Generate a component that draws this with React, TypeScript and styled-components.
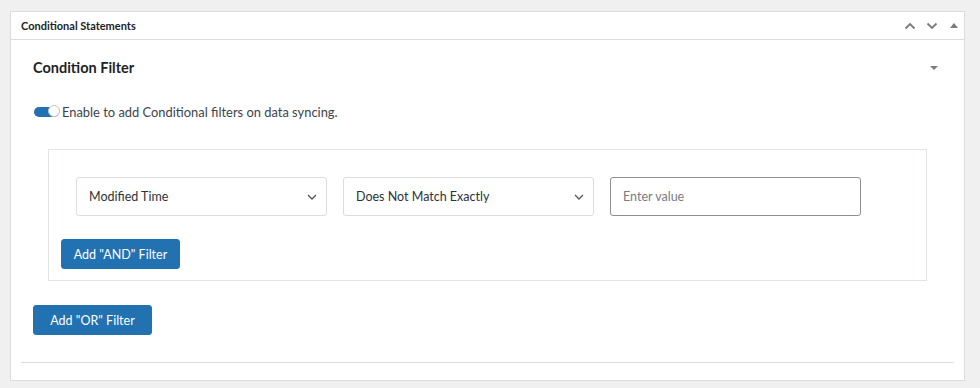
import styled, { createGlobalStyle } from "styled-components";

const GlobalStyle = createGlobalStyle`
  html, body {
    margin: 0;
    padding: 0;
    background: #f0f0f1;
    font-family: "Lato", "Open Sans", sans-serif;
    color: #1d2327;
  }
`;

const Page = styled.div`
  padding: 11px 15px 0 10px;
`;

const Panel = styled.div`
  background: #fff;
  border: 1px solid #dcdcde;
  box-shadow: 0 1px 1px rgba(0, 0, 0, 0.04);
  padding-bottom: 17px;
`;

const PanelHeader = styled.div`
  height: 27px;
  border-bottom: 1px solid #dcdcde;
  display: flex;
  align-items: center;
  justify-content: space-between;
  padding: 0 3px 0 10px;
`;

const PanelTitle = styled.h2`
  margin: 0;
  font-size: 11px;
  font-weight: 700;
  color: #1d2327;
`;

const HeaderActions = styled.div`
  display: flex;
  align-items: center;
  gap: 8px;
  color: #787c82;
`;

const HeaderIcon = styled.span`
  display: inline-flex;
  width: 14px;
  justify-content: center;
`;

const PanelBody = styled.div`
  margin: 0 10px;
  padding: 0 12px 27px;
  border-bottom: 1px solid #dcdcde;
`;

const SectionHead = styled.div`
  height: 54px;
  display: flex;
  align-items: center;
  justify-content: space-between;
`;

const SectionTitle = styled.h3`
  margin: 0;
  font-size: 14.5px;
  font-weight: 700;
  color: #1d2327;
`;

const Caret = styled.span`
  width: 0;
  height: 0;
  border-left: 4px solid transparent;
  border-right: 4px solid transparent;
  border-top: 4px solid #787c82;
  margin-right: 4px;
  margin-top: 2px;
`;

const ToggleRow = styled.label`
  display: flex;
  align-items: center;
  gap: 3px;
  font-size: 12.9px;
  color: #3c434a;
  margin-top: 4px;
  height: 28px;
  padding-left: 1px;
`;

const Toggle = styled.span<{ $on: boolean }>`
  position: relative;
  width: 25px;
  height: 10px;
  border-radius: 5px;
  background: ${({ $on }) => ($on ? "#2271b1" : "#c3c4c7")};
`;

const Knob = styled.span<{ $on: boolean }>`
  position: absolute;
  top: -2px;
  ${({ $on }) => ($on ? "right: -1px;" : "left: -1px;")}
  width: 12px;
  height: 12px;
  border-radius: 50%;
  background: #fff;
  border: 1px solid #c3c4c7;
  box-sizing: border-box;
`;

const FilterGroup = styled.div`
  margin: 23px 15px 0;
  border: 1px solid #e2e4e7;
  padding: 27px 12px 11px;
`;

const ConditionRow = styled.div`
  display: flex;
  gap: 16px;
  padding-left: 15px;
`;

const SelectBox = styled.div`
  width: 251px;
  height: 39px;
  box-sizing: border-box;
  border: 1px solid #dcdcde;
  border-radius: 3px;
  display: flex;
  align-items: center;
  justify-content: space-between;
  padding: 0 9px 0 12px;
  font-size: 12.5px;
  color: #2c3338;
`;

const ValueInput = styled.input`
  width: 251px;
  height: 39px;
  box-sizing: border-box;
  border: 1px solid #8c8f94;
  border-radius: 3px;
  padding: 0 12px;
  font-family: inherit;
  font-size: 12.5px;
  color: #2c3338;
  &::placeholder {
    color: #787c82;
  }
`;

const BlueButton = styled.button<{ $width: number }>`
  width: ${({ $width }) => $width}px;
  height: 30px;
  border: 1px solid #2271b1;
  border-radius: 3px;
  background: #2271b1;
  color: #fff;
  font-family: inherit;
  font-size: 12.5px;
  cursor: pointer;
`;

const AndWrap = styled.div`
  margin-top: 23px;
`;

const OrWrap = styled.div`
  margin-top: 24px;
`;

const Chevron = ({ dir }: { dir: "up" | "down" }) => (
  <svg width="12" height="8" viewBox="0 0 12 8">
    <path
      d={dir === "up" ? "M1.5 6.5 L6 2 L10.5 6.5" : "M1.5 1.5 L6 6 L10.5 1.5"}
      fill="none"
      stroke="#787c82"
      strokeWidth="1.8"
    />
  </svg>
);

const SelectArrow = () => (
  <svg width="10" height="6" viewBox="0 0 10 6">
    <path d="M1 1 L5 5 L9 1" fill="none" stroke="#50575e" strokeWidth="1.3" />
  </svg>
);

const TriUp = styled.span`
  width: 0;
  height: 0;
  border-left: 4px solid transparent;
  border-right: 4px solid transparent;
  border-bottom: 5px solid #787c82;
`;

const App = () => {
  return (
    <>
      <GlobalStyle />
      <Page>
        <Panel>
          <PanelHeader>
            <PanelTitle>Conditional Statements</PanelTitle>
            <HeaderActions>
              <HeaderIcon>
                <Chevron dir="up" />
              </HeaderIcon>
              <HeaderIcon>
                <Chevron dir="down" />
              </HeaderIcon>
              <HeaderIcon>
                <TriUp />
              </HeaderIcon>
            </HeaderActions>
          </PanelHeader>
          <PanelBody>
            <SectionHead>
              <SectionTitle>Condition Filter</SectionTitle>
              <Caret />
            </SectionHead>
            <ToggleRow>
              <Toggle $on>
                <Knob $on />
              </Toggle>
              Enable to add Conditional filters on data syncing.
            </ToggleRow>
            <FilterGroup>
              <ConditionRow>
                <SelectBox>
                  Modified Time
                  <SelectArrow />
                </SelectBox>
                <SelectBox>
                  Does Not Match Exactly
                  <SelectArrow />
                </SelectBox>
                <ValueInput placeholder="Enter value" />
              </ConditionRow>
              <AndWrap>
                <BlueButton $width={119}>Add "AND" Filter</BlueButton>
              </AndWrap>
            </FilterGroup>
            <OrWrap>
              <BlueButton $width={119}>Add "OR" Filter</BlueButton>
            </OrWrap>
          </PanelBody>
        </Panel>
      </Page>
    </>
  );
};

export default App;
